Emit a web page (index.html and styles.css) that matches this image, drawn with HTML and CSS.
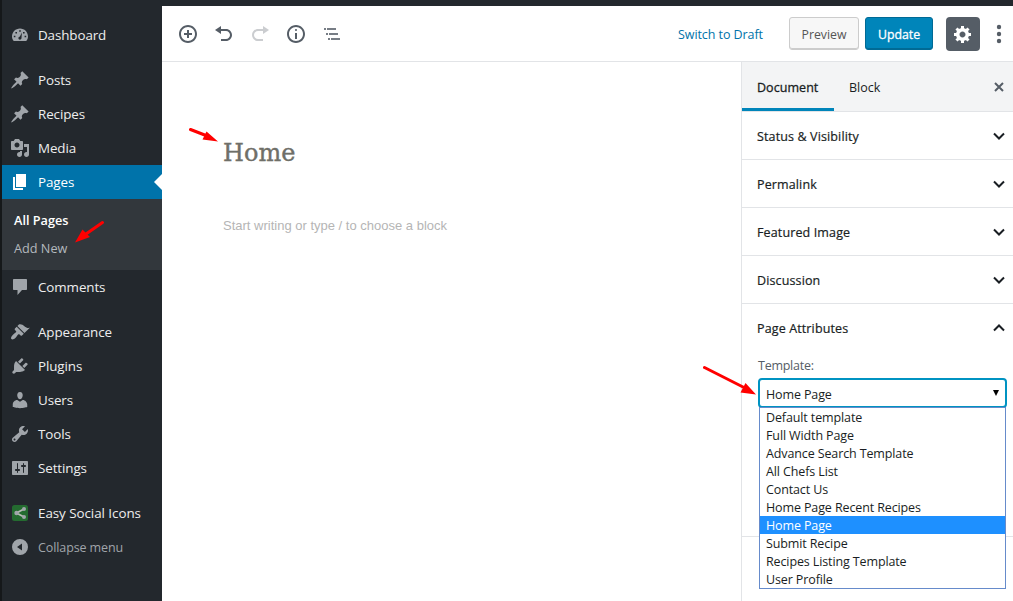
FILE: index.html
```html
<!DOCTYPE html>
<html lang="en">
<head>
<meta charset="utf-8">
<title>Edit Page</title>
<link rel="stylesheet" href="styles.css">
</head>
<body>
<div class="app">
  <nav class="sidebar">
    <a class="item"><svg class="icon" viewBox="0 0 20 20"><path fill-rule="evenodd" d="M3.760 16h12.480C17.340 14.620 18 13.400 18 11.500 18 7.100 14.420 3.500 10 3.500S2 7.100 2 11.500c0 1.900.66 3.120 1.760 4.500zM9.200 5.200h1.600v1.600H9.200zM5.400 6.900h1.600v1.600h-1.600zM13 6.900h1.600v1.600h-1.600zM3.800 10.700h1.600v1.600h-1.600zM14.600 10.700h1.600v1.600h-1.600zM11.900 7.600l-.4 5.400c-.1 2.300-3.200 2.100-3.100 0 .1-.9.8-1.300 1.500-1.600z"/></svg>Dashboard</a>
    <a class="item gap"><svg class="icon" viewBox="0 0 20 20"><path id="pin" d="M10.440 3.020l1.820-1.820 6.360 6.350-1.830 1.820c-1.050-.68-2.480-.57-3.410.36l-.75.75c-.92.93-1.040 2.350-.35 3.410l-1.830 1.820-2.410-2.410-2.800 2.790c-.42.42-3.380 2.710-3.800 2.290s1.860-3.390 2.280-3.810l2.790-2.790L4.100 9.360l1.830-1.820c1.050.69 2.480.57 3.400-.36l.75-.75c.93-.92 1.050-2.350.36-3.410z"/></svg>Posts</a>
    <a class="item"><svg class="icon" viewBox="0 0 20 20"><use href="#pin"/></svg>Recipes</a>
    <a class="item"><svg class="icon" viewBox="0 0 20 20"><path fill-rule="evenodd" d="M13 11V4c0-.55-.45-1-1-1h-1.670L9 1H5L3.670 3H2c-.55 0-1 .45-1 1v7c0 .55.45 1 1 1h10c.55 0 1-.45 1-1zM7 4.500c1.380 0 2.500 1.120 2.500 2.500S8.380 9.500 7 9.500 4.500 8.380 4.500 7 5.620 4.500 7 4.500zM14 6h5v10.500c0 1.380-1.120 2.500-2.500 2.500S14 17.880 14 16.500s1.120-2.500 2.500-2.500c.17 0 .34.02.5.05V9h-3V6zm-4 8.050V13h2v3.500c0 1.380-1.120 2.500-2.500 2.500S7 17.880 7 16.500 8.120 14 9.500 14c.17 0 .34.02.5.05z"/></svg>Media</a>
    <a class="item current"><svg class="icon" viewBox="0 0 20 20"><path d="M6 15V2h10v13H6zm-1 1h8v2H3V5h2v11z"/></svg>Pages</a>
    <div class="submenu"><a class="sub active">All Pages</a><a class="sub">Add New</a></div>
    <a class="item"><svg class="icon" viewBox="0 0 20 20"><path d="M4 2h12c.6 0 1 .4 1 1v9c0 .6-.4 1-1 1h-4l-4.500 5v-5H4c-.6 0-1-.4-1-1V3c0-.6.4-1 1-1z"/></svg>Comments</a>
    <a class="item gap"><svg class="icon" viewBox="0 0 20 20"><path d="M14.480 11.060L7.410 3.990l1.500-1.500c.5-.56 2.300-.47 3.510.32 1.210.8 1.430 1.280 2.910 2.100 1.180.64 2.450 1.260 4.450.85zm-.71.71L6.700 4.700 4.930 6.470c-.39.39-.39 1.020 0 1.410l1.060 1.060c.39.39.39 1.030 0 1.420-.6.6-1.430 1.110-2.210 1.690-.35.26-.7.53-1.010.84C1.430 14.230.4 16.080 1.400 17.070c.99 1 2.840-.03 4.180-1.360.31-.31.58-.66.85-1.020.57-.78 1.080-1.610 1.690-2.210.39-.39 1.020-.39 1.410 0l1.060 1.060c.39.39 1.020.39 1.410 0z"/></svg>Appearance</a>
    <a class="item"><svg class="icon" viewBox="0 0 20 20"><path d="M13.110 4.360L9.870 7.600 8 5.730l3.240-3.240c.35-.34 1.050-.2 1.560.32.52.51.66 1.210.31 1.550zm-8 1.770l.91-1.120 9.010 9.010-1.190.84c-.71.71-2.630 1.160-3.820 1.160H6.140L4.900 17.260c-.59.59-1.540.59-2.120 0-.59-.58-.59-1.530 0-2.120l1.240-1.240v-3.880c0-1.130.4-3.190 1.090-3.890zm7.260 3.970l3.240-3.240c.34-.35 1.040-.21 1.550.31.52.51.66 1.210.31 1.550l-3.240 3.250z"/></svg>Plugins</a>
    <a class="item"><svg class="icon" viewBox="0 0 20 20"><path d="M10 9.250c-2.270 0-2.730-3.440-2.730-3.440C7 4.020 7.820 2 9.970 2c2.160 0 2.980 2.020 2.710 3.810 0 0-.41 3.440-2.680 3.440zm0 2.570L12.720 10c2.390 0 4.520 2.330 4.520 4.530v2.490s-3.650 1.130-7.240 1.130c-3.650 0-7.240-1.130-7.240-1.130v-2.490c0-2.250 1.940-4.480 4.470-4.480z"/></svg>Users</a>
    <a class="item"><svg class="icon" viewBox="0 0 20 20"><path fill-rule="evenodd" d="M16.680 9.770c-1.340 1.340-3.300 1.670-4.950.99l-5.410 6.520c-.99.99-2.590.99-3.580 0s-.99-2.590 0-3.570l6.520-5.420c-.68-1.650-.35-3.610.99-4.950 1.280-1.280 3.120-1.620 4.720-1.060l-2.890 2.890 2.820 2.820 2.860-2.870c.53 1.580.18 3.390-1.080 4.650zM3.810 16.210c.4.39 1.040.39 1.430 0 .4-.4.4-1.040 0-1.430-.39-.4-1.030-.4-1.430 0-.39.39-.39 1.030 0 1.430z"/></svg>Tools</a>
    <a class="item"><svg class="icon" viewBox="0 0 20 20"><path fill-rule="evenodd" d="M18 16V4c0-.55-.45-1-1-1H3c-.55 0-1 .45-1 1v12c0 .55.45 1 1 1h14c.55 0 1-.45 1-1zM8 11h1c.55 0 1 .45 1 1s-.45 1-1 1H8v1.500c0 .28-.22.5-.5.5s-.5-.22-.5-.5V13H6c-.55 0-1-.45-1-1s.45-1 1-1h1V5.500c0-.28.22-.5.5-.5s.5.22.5.5V11zm5-2h-1c-.55 0-1-.45-1-1s.45-1 1-1h1V5.500c0-.28.22-.5.5-.5s.5.22.5.5V7h1c.55 0 1 .45 1 1s-.45 1-1 1h-1v5.500c0 .28-.22.5-.5.5s-.5-.22-.5-.5V9z"/></svg>Settings</a>
    <a class="item gap wide"><svg class="icon" viewBox="0 0 20 20"><rect x="2" y="2" width="16" height="16" rx="2.500" fill="#246b30"/><path d="M14 6L6.500 10l7.500 4" fill="none" stroke="#b5bcb4" stroke-width="1.800"/><circle cx="14" cy="6" r="2"/><circle cx="6.500" cy="10" r="2.200"/><circle cx="14" cy="14" r="2"/></svg>Easy Social Icons</a>
    <a class="item collapse"><svg class="icon" viewBox="0 0 20 20"><path fill-rule="evenodd" d="M10 2a8 8 0 1 0 0 16 8 8 0 0 0 0-16zm2 4.500v7L7 10z"/></svg>Collapse menu</a>
  </nav>
  <div class="main">
    <header class="toolbar">
      <div class="tools">
        <svg class="tool" viewBox="0 0 20 20"><path fill-rule="evenodd" d="M10 1c-5 0-9 4-9 9s4 9 9 9 9-4 9-9-4-9-9-9zm0 16c-3.900 0-7-3.100-7-7s3.100-7 7-7 7 3.100 7 7-3.100 7-7 7zm1-11H9v3H6v2h3v3h2v-3h3V9h-3V6z"/></svg>
        <svg class="tool" viewBox="0 0 20 20"><path d="M12 5H7V2L1 6l6 4V7h5c2.200 0 4 1.800 4 4s-1.800 4-4 4H7v2h5c3.300 0 6-2.700 6-6s-2.700-6-6-6z"/></svg>
        <svg class="tool disabled" viewBox="0 0 20 20"><path d="M8 5h5V2l6 4-6 4V7H8c-2.200 0-4 1.800-4 4s1.800 4 4 4h5v2H8c-3.300 0-6-2.700-6-6s2.700-6 6-6z"/></svg>
        <svg class="tool" viewBox="0 0 20 20"><path fill-rule="evenodd" d="M9 15h2V9H9v6zm1-10c-.5 0-1 .5-1 1s.5 1 1 1 1-.5 1-1-.5-1-1-1zm0-4c-5 0-9 4-9 9s4 9 9 9 9-4 9-9-4-9-9-9zm0 16c-3.900 0-7-3.100-7-7s3.100-7 7-7 7 3.100 7 7-3.100 7-7 7z"/></svg>
        <svg class="tool" viewBox="0 0 20 20"><path opacity=".8" d="M2 4h2v2H2zM5 4h9v2H5zM4 9h2v2H4zM7 9h9v2H7zM6 14h2v2H6zM9 14h9v2H9z"/></svg>
      </div>
      <a class="draft">Switch to Draft</a>
      <button class="btn preview">Preview</button>
      <button class="btn update">Update</button>
      <div class="gear"><svg class="tool" viewBox="0 0 20 20"><path fill-rule="evenodd" d="M18 12h-2.180c-.17.7-.44 1.350-.81 1.930l1.540 1.540-2.100 2.100-1.540-1.540c-.58.36-1.230.63-1.910.79V19H8v-2.180c-.68-.16-1.330-.43-1.910-.79l-1.540 1.540-2.120-2.120 1.540-1.540c-.36-.58-.63-1.230-.79-1.910H1V9.030h2.170c.16-.7.44-1.350.8-1.940L2.430 5.550l2.100-2.100 1.540 1.540c.58-.37 1.240-.64 1.930-.81V2h3v2.180c.68.16 1.330.43 1.910.79l1.540-1.540 2.120 2.120-1.540 1.540c.36.59.64 1.240.8 1.940H18V12zm-8.500 1.500c1.660 0 3-1.340 3-3s-1.340-3-3-3-3 1.340-3 3 1.340 3 3 3z"/></svg></div>
      <svg class="more" viewBox="0 0 6 20"><circle cx="3" cy="3" r="2.200"/><circle cx="3" cy="10" r="2.200"/><circle cx="3" cy="17" r="2.200"/></svg>
    </header>
    <div class="workspace">
      <main class="editor">
        <h1 class="title">Home</h1>
        <p class="prompt">Start writing or type / to choose a block</p>
      </main>
      <aside class="settings">
        <div class="tabs"><span class="tab selected">Document</span><span class="tab">Block</span><svg class="close" viewBox="0 0 12 12"><path d="M2 2l8 8M10 2l-8 8"/></svg></div>
        <div class="panel"><span class="name">Status &amp; Visibility</span><svg class="chev" viewBox="0 0 14 10"><path d="M2 2.500l5 5 5-5"/></svg></div>
        <div class="panel"><span class="name">Permalink</span><svg class="chev" viewBox="0 0 14 10"><path d="M2 2.500l5 5 5-5"/></svg></div>
        <div class="panel"><span class="name">Featured Image</span><svg class="chev" viewBox="0 0 14 10"><path d="M2 2.500l5 5 5-5"/></svg></div>
        <div class="panel"><span class="name">Discussion</span><svg class="chev" viewBox="0 0 14 10"><path d="M2 2.500l5 5 5-5"/></svg></div>
        <section class="attributes">
          <div class="panel open"><span>Page Attributes</span><svg class="chev" viewBox="0 0 14 10"><path d="M2 7.500l5-5 5 5"/></svg></div>
          <div class="label">Template:</div>
          <div class="select"><span>Home Page</span><svg class="caret" viewBox="0 0 6 6"><path d="M0 0h6L3 6z"/></svg>
            <div class="options">
              <div class="option">Default template</div>
              <div class="option">Full Width Page</div>
              <div class="option">Advance Search Template</div>
              <div class="option">All Chefs List</div>
              <div class="option">Contact Us</div>
              <div class="option">Home Page Recent Recipes</div>
              <div class="option chosen">Home Page</div>
              <div class="option">Submit Recipe</div>
              <div class="option">Recipes Listing Template</div>
              <div class="option">User Profile</div>
            </div>
          </div>
        </section>
      </aside>
    </div>
  </div>
  <svg class="arrows" viewBox="0 0 1013 601">
    <g stroke="#f00" stroke-width="3" stroke-linecap="round"><path d="M190.500 129.500L206 135.500M102.500 222.500L86 234M704.500 367.500L744 387.500"/></g>
    <g fill="#f00"><path d="M218 141.500L202.500 139.500 206.500 131.500zM75 242.500L82.500 229.500 90 237zM756 394.500L740.500 392.500 745.500 383z"/></g>
  </svg>
</div>
</body>
</html>
```
FILE: styles.css
```css
* { box-sizing: border-box; }
body { margin: 0; font-family: "Open Sans", "Noto Sans", sans-serif; font-size: 12.5px; color: #191e23; }
.app { position: relative; display: flex; width: 1013px; height: 601px; overflow: hidden; background: #23282d; }
.sidebar { width: 162px; padding-top: 18px; border-left: 2px solid #15181a; }
.item { position: relative; display: flex; align-items: center; gap: 8px; height: 34px; padding-left: 8px; color: #eee; font-size: 13.4px; letter-spacing: -.1px; white-space: nowrap; }
.item.gap { margin-top: 11px; }
.item.wide { letter-spacing: -.05px; }
.icon { width: 20px; height: 20px; flex: none; fill: #a0a5aa; }
.current { background: #0073aa; color: #fff; }
.current .icon { fill: #fff; }
.current::after { content: ""; position: absolute; right: 0; top: 9px; border: 8px solid transparent; border-right-color: #fff; border-left: 0; }
.submenu { height: 71px; padding-top: 7px; background: #32373c; }
.sub { display: block; height: 28px; padding-left: 12px; line-height: 28px; font-size: 12.7px; color: #b4b9be; }
.sub.active { color: #fff; font-weight: 600; }
.item.collapse { color: #a0a5aa; font-size: 12.5px; }
.main { display: flex; flex-direction: column; width: 851px; margin-top: 6px; background: #fff; }
.toolbar { display: flex; align-items: center; height: 56px; padding: 0 11px 0 16px; border-bottom: 1px solid #e2e4e7; }
.tools { display: flex; gap: 16px; margin-right: auto; }
.tool { display: block; width: 20px; height: 20px; fill: #555d66; }
.disabled { opacity: .3; }
.draft { margin-right: 26px; padding-top: 2px; color: #0073aa; letter-spacing: -.07px; }
.btn { height: 33px; padding: 1px 0 0; border: 1px solid #ccc; border-radius: 3px; font: 12.3px "Open Sans", sans-serif; }
.preview { width: 70px; margin-right: 6px; color: #555; background: #f7f7f7; box-shadow: inset 0 -1px 0 #ccc; }
.update { width: 68px; margin-right: 13px; color: #fff; -webkit-text-stroke: .3px #fff; background: #0085ba; border-color: #006a95; box-shadow: inset 0 -1px 0 #006a95; }
.gear { width: 34px; height: 34px; padding: 7px; margin-right: 16px; border-radius: 4px; background: #555d66; }
.gear .tool { fill: #fff; }
.more { width: 6px; height: 20px; fill: #555d66; }
.workspace { display: flex; flex: 1; }
.editor { flex: 1; padding: 73px 0 0 61px; }
.title { margin: 0; font: 24px/36px "DejaVu Serif", serif; color: #6f6f68; -webkit-text-stroke: .4px #6f6f68; }
.prompt { margin: 45px 0 0; font: 13px/20px "Liberation Sans", sans-serif; color: #b5b5b5; }
.settings { width: 272px; border-left: 1px solid #e2e4e7; }
.tabs { display: flex; align-items: center; height: 50px; padding-right: 8px; background: #f3f4f5; border-bottom: 1px solid #e2e4e7; }
.tab { height: 49px; padding: 0 15px; line-height: 51px; }
.tab.selected { width: 92px; -webkit-text-stroke: .3px #191e23; letter-spacing: .05px; border-bottom: 3px solid #0085ba; }
.close { width: 12px; height: 12px; margin-left: auto; fill: none; stroke: #555d66; stroke-width: 2; }
.panel { display: flex; align-items: center; justify-content: space-between; height: 48px; padding: 0 7px 0 15px; border-bottom: 1px solid #e2e4e7; letter-spacing: .13px; -webkit-text-stroke: .2px #191e23; }
.panel.open { border: 0; }
.name { padding-top: 2px; }
.chev { width: 14px; height: 10px; fill: none; stroke: #191e23; stroke-width: 2; }
.attributes { height: 233px; border-bottom: 1px solid #e2e4e7; }
.label { height: 26px; padding-left: 16px; line-height: 27px; color: #555d66; letter-spacing: -.25px; }
.select { position: relative; display: flex; align-items: center; justify-content: space-between; width: 249px; height: 30px; margin-left: 16px; padding: 2px 6px 0 6px; border: 2px solid #0093c2; border-radius: 4px; letter-spacing: -.12px; }
.caret { width: 6px; height: 6px; margin-bottom: 3px; }
.options { position: absolute; top: 27px; left: -1px; width: 247px; height: 182px; background: #fff; border: 1px solid #668bcb; }
.option { height: 18px; padding-left: 6px; line-height: 20px; white-space: nowrap; }
.chosen { color: #fff; background: #1e90ff; }
.arrows { position: absolute; top: 0; left: 0; width: 1013px; height: 601px; pointer-events: none; }
```
